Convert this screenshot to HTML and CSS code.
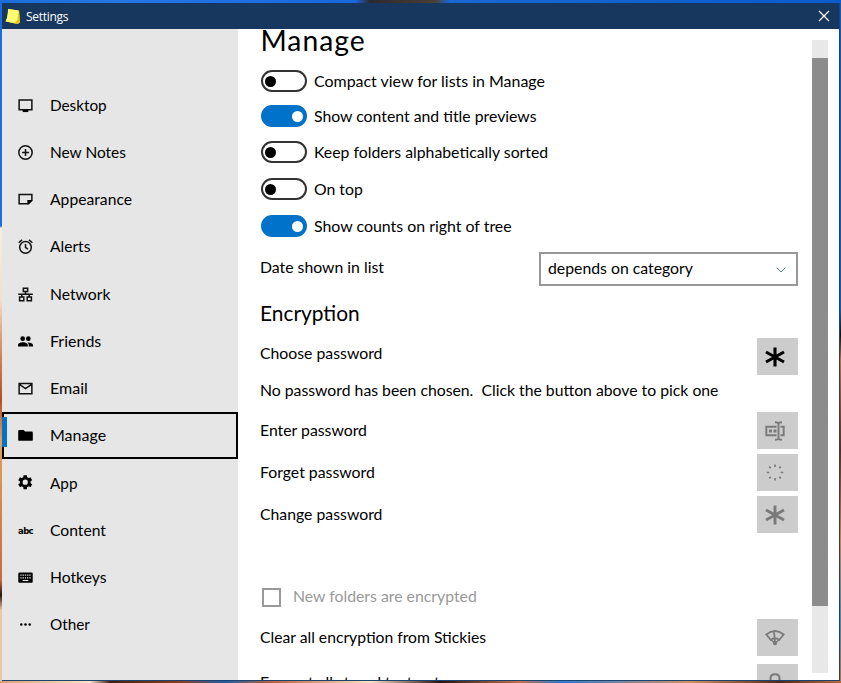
FILE: index.html
```
<!DOCTYPE html>
<html lang="en">
<head>
<meta charset="utf-8">
<title>Settings</title>
<link rel="stylesheet" href="styles.css">
</head>
<body>
<div class="window">
  <header class="titlebar">
    <svg class="logo" viewBox="0 0 16 17"><path d="M3 1L14 2.5 15 14.5 12.5 16 .6 13.5C2.4 10 3 6 3 1Z" fill="#f7ed36"/><path d="M3 1L13 2.4 12.6 12 9.5 15.2.6 13.3C2.4 10 3 6 3 1Z" fill="#fffb72"/><path d="M14 2.5L15 14.5 12.5 16 9.5 15.3 12.4 12Z" fill="#e2c41c"/></svg>
    <span>Settings</span>
    <svg class="close" viewBox="0 0 12 12"><path d="M1 1L11 11M11 1L1 11" stroke="#fff" stroke-width="1.3"/></svg>
  </header>
  <div class="body">
    <nav class="side">
      <a class="item"><svg viewBox="0 0 16 16"><path d="M1.2 2.2h13.6v10.300H1.200z" class="ln"/><path d="M5 12.500h6V15H5z"/></svg><span>Desktop</span></a>
      <a class="item"><svg viewBox="0 0 16 16"><circle cx="8" cy="8" r="7.100" class="ln"/><path d="M8 4.300v7.400M4.300 8h7.400" class="ln"/></svg><span class="notes">New Notes</span></a>
      <a class="item"><svg viewBox="0 0 16 16"><path d="M1.200 2.700h13.600v6.300l-3.500 3.500H1.200z" class="ln"/><path d="M10 13.200V8.500h5.500z"/></svg><span class="wide">Appearance</span></a>
      <a class="item"><svg viewBox="0 0 16 16"><circle cx="8" cy="8.900" r="6.200" class="ln"/><path d="M8 5.200v3.800l2.500 1.800M.7 4L4.300 1M15.300 4L11.700 1" class="ln"/></svg><span class="alerts">Alerts</span></a>
      <a class="item"><svg class="low" viewBox="0 0 16 16"><path d="M5.700 1.200h4.600v3.600H5.700zM1.700 10.700h4.500v4H1.700zM9.800 10.700h4.500v4H9.800zM8 5v2.700M.2 7.700h15.600M4 8v2.500M12 8v2.500" class="ln"/></svg><span class="wide">Network</span></a>
      <a class="item"><svg class="low" viewBox="0 0 16 16"><circle cx="5" cy="5" r="2.500"/><circle cx="11" cy="5" r="2.500"/><path d="M0 13.300v-1.600C0 9.500 3.300 8.700 5.200 8.700s5.200.8 5.200 3v1.600zM11.400 13.300v-1.600c0-1.200-.6-2-1.400-2.600 2-.4 6 .5 6 2.600v1.600z"/></svg><span class="friends">Friends</span></a>
      <a class="item"><svg viewBox="0 0 16 16"><path d="M1.200 2.700h13.600v10.800H1.200zM1.500 3.500L8 8.200l6.500-4.700" class="ln"/></svg><span class="friends">Email</span></a>
      <a class="item current"><svg viewBox="0 0 16 16"><path d="M.2 3.500q0-1.300 1.300-1.300H6l1.600 1.600h6.900q1.300 0 1.300 1.300v7.300q0 1.300-1.300 1.300h-13Q.2 13.700.2 12.400z"/></svg><span class="friends">Manage</span></a>
      <a class="item"><svg viewBox="0 0 16 16"><circle cx="7.700" cy="7.700" r="4.300" fill="none" stroke="#000" stroke-width="3"/><path d="M7.700.2v3M7.700 12.200v3M1.200 3.950l2.600 1.500M11.600 9.950l2.600 1.500M1.200 11.450l2.600-1.500M11.600 5.450l2.600-1.500" stroke="#000" stroke-width="3.800"/></svg><span>App</span></a>
      <a class="item"><b class="abc">abc</b><span class="wide">Content</span></a>
      <a class="item"><svg class="low" viewBox="0 0 16 16"><rect x=".3" y="2.700" width="15.400" height="11" rx="1.200"/><path d="M2.500 5.500h11M2.500 8.300h11" stroke="#e6e6e6" stroke-width="1.300" stroke-dasharray="1.400 1"/><path d="M5 11.200h6" stroke="#e6e6e6" stroke-width="1.200"/></svg><span class="wide">Hotkeys</span></a>
      <a class="item"><svg viewBox="0 0 16 16"><circle cx="3.500" cy="8" r="1.350"/><circle cx="8" cy="8" r="1.350"/><circle cx="12.500" cy="8" r="1.350"/></svg><span>Other</span></a>
    </nav>
    <main class="pane">
      <h1>Manage</h1>
      <div class="row"><i class="toggle"></i><span class="compact">Compact view for lists in Manage</span></div>
      <div class="row r2"><i class="toggle on"></i><span>Show content and title previews</span></div>
      <div class="row r3"><i class="toggle"></i><span>Keep folders alphabetically sorted</span></div>
      <div class="row r4"><i class="toggle"></i><span>On top</span></div>
      <div class="row r4"><i class="toggle on"></i><span class="counts">Show counts on right of tree</span></div>
      <div class="row date"><span>Date shown in list</span>
        <div class="select"><span>depends on category</span><svg viewBox="0 0 10 6"><path d="M.7.7L5 5 9.300.7" fill="none" stroke="#4a7f9f"/></svg></div></div>
      <h2>Encryption</h2>
      <div class="row act choose"><span>Choose password</span><button><svg viewBox="0 0 20 20"><path d="M10 .5v19M1 5l18 10M1 15L19 5" stroke="#000" stroke-width="3.100"/></svg></button></div>
      <div class="row note"><span>No password has been chosen.&nbsp; Click the button above to pick one</span></div>
      <div class="row act"><span>Enter password</span><button><svg viewBox="0 0 20 20"><g fill="none" stroke="#7a7a7a" stroke-width="1.900"><path d="M11.500 5.800H1.300v8.400h10.200M15.500 5.800h3.200v8.400h-3.200M13.500 2v16M10 1.200q3.500 0 3.500 1.500 0-1.500 3.500-1.500M10 18.800q3.500 0 3.500-1.500 0 1.500 3.500 1.500"/></g><path d="M4 8.500h3v3H4zM8.500 8.500h3v3h-3z" fill="#7a7a7a"/></svg></button></div>
      <div class="row act"><span>Forget password</span><button><svg viewBox="0 0 20 20"><path d="M10 1.500v2.500M10 15v2.500M1.800 9.500h2.500M15.700 9.500h2.500M4.200 3.700l1.500 1.500M14.300 13.800l1.500 1.500M4.200 15.300l1.500-1.500M14.300 5.200l1.500-1.500" stroke="#7a7a7a" stroke-width="1.700"/></svg></button></div>
      <div class="row act"><span>Change password</span><button><svg viewBox="0 0 20 20"><path d="M10 .5v19M1 5l18 10M1 15L19 5" stroke="#7a7a7a" stroke-width="2.900"/></svg></button></div>
      <div class="row check"><i class="box"></i><span>New folders are encrypted</span></div>
      <div class="row act clear"><span>Clear all encryption from Stickies</span><button><svg viewBox="0 0 20 20"><g fill="none" stroke="#7a7a7a" stroke-width="1.800"><path d="M1.300 6.500Q10-.5 18.700 6.500L14.300 11.800Q10 8.700 5.700 11.800zM9 3.500L10 15"/><path d="M5.700 11.500L10 15.300 14.300 11.500" stroke-width="1.300"/></g><circle cx="10" cy="15.300" r="2" fill="#7a7a7a"/></svg></button></div>
      <div class="row act last"><span>Encrypt all stored text notes</span><button><svg viewBox="0 0 20 20"><path d="M5.500 9V5.500q0-4.200 4.500-4.200t4.500 4.200V9" fill="none" stroke="#7a7a7a" stroke-width="2.100"/><path d="M3 8.200h14V19H3z" fill="#7a7a7a"/></svg></button></div>
    </main>
    <div class="track"><div class="thumb"></div></div>
  </div>
</div>
</body>
</html>
```
FILE: styles.css
```
* { box-sizing: border-box; }
html, body { height: 683px; overflow: hidden; }
body {
  margin: 0;
  padding: 3px 1px 2px 2px;
  font: 15.800px/20px Lato, "Liberation Sans", sans-serif;
  color: #000;
  background:
    linear-gradient(90deg, #1b6ddb, #2577e6 120px, #1868de 355px, #2c2930 370px, #4a4030 435px, #1867d5 450px, #0a5bcc) top / 100% 3px no-repeat,
    linear-gradient(90deg, #d9a071, #f8e4c8 90px, #432111 110px, #8b3c1b 180px, #1c5da4 225px, #b75f3b 270px, #fae3c5 370px, #2a1410 440px, #c3714c 520px, #2b7bd2 560px, #d19061 690px, #542817 780px, #b56a40) bottom / 100% 2px no-repeat,
    linear-gradient(#1b6ddb 226px, #f5ede4 228px, #f3dfcc 300px, #d79a70 340px, #b64f24 400px, #e0a060 440px, #c56c3e 580px, #2c1510 595px, #e8c8a2 610px) left / 2px 100% no-repeat,
    linear-gradient(#075bcf 310px, #101014 335px, #c6683a 360px, #6c2515 450px, #d77c43 540px, #4787bb 620px, #bd6d43) right / 2px 100% no-repeat;
}
.window { height: 678px; border: solid #1d4470; border-width: 0 1px 1px 0; overflow: hidden; background: #fff; }
.titlebar { height: 26px; background: #17375e; color: #fff; display: flex; align-items: center; padding: 0 9px 0 3px; font: 12px "Open Sans", sans-serif; }
.titlebar span { margin: 0 0 0 5px; letter-spacing: -.300px; }
.logo { width: 16px; height: 17px; }
.close { width: 12px; height: 12px; margin-left: auto; }
.body { display: flex; height: 651px; }
.side { width: 236px; flex: none; background: #e6e6e6; padding-top: 52.450px; }
.item { height: 47.200px; display: flex; align-items: center; gap: 17px; padding-left: 16px; font-size: 15.300px; }
.item .notes { font-size: 15.450px; }
.item .wide { font-size: 15.700px; }
.item .friends { font-size: 16px; }
.item .alerts { font-size: 15.600px; margin-bottom: 1px; }
.item svg { width: 15px; height: 15px; }
.item .low { margin-top: 1px; }
.item .ln { fill: none; stroke: #111; stroke-width: 1.600; }
.abc { width: 15px; margin-top: 3px; font: bold 8.500px/15px "DejaVu Sans", sans-serif; letter-spacing: -.600px; }
.current { position: relative; box-shadow: inset 0 0 0 2px #000; }
.current::before { content: ""; position: absolute; left: 0; top: 5px; width: 5px; height: 30px; background: #0072c9; }
.pane { width: 538px; margin-left: 22px; flex: none; overflow: hidden; white-space: nowrap; }
h1 { margin: 0; height: 35px; font: 28.300px/23px Lato, sans-serif; letter-spacing: 1px; padding-left: .500px; }
h2 { margin: 11px 0 7px; height: 34px; font: 20.900px/31px Lato, sans-serif; }
.row { height: 34px; display: flex; align-items: center; }
.compact { font-size: 15.950px; }
.counts { font-size: 15.900px; }
.r2 { margin-top: 1px; }
.r3 { margin-top: 2px; }
.r4 { margin-top: 3px; }
.toggle { width: 46px; height: 22px; border: 2px solid #333; border-radius: 11px; margin: 0 7.500px 0 .500px; display: flex; align-items: center; padding: 0 2px; }
.toggle::after { content: ""; width: 11px; height: 11px; border-radius: 50%; background: #000; }
.toggle.on { background: #0072c9; border-color: #0072c9; justify-content: flex-end; }
.toggle.on::after { background: #fff; }
.date { margin-top: 9px; justify-content: space-between; }
.date > span { margin-bottom: 4px; }
.select { width: 259px; height: 34px; border: 2px solid #999; display: flex; align-items: center; justify-content: space-between; padding: 0 10px 0 7px; }
.select span { margin-bottom: 2px; }
.select svg { width: 10px; height: 6px; margin-top: 2px; }
.act { height: 37px; margin-top: 5px; justify-content: space-between; }
.act span, .note span, .check span { margin-bottom: 2px; }
.act button { width: 41px; height: 37px; padding: 0 4px 0 0; border: 0; background: #ccc; display: flex; align-items: center; justify-content: center; }
.act svg { width: 20px; height: 20px; margin: 0 .500px 0 0; }
.choose { margin-top: 0; }
.choose span { margin-bottom: 8px; }
.note { height: 32px; }
.note span { font-size: 15.780px; }
.clear span { font-size: 15.700px; }
.check { margin-top: 47px; color: #999; }
.box { width: 19px; height: 19px; border: 2px solid #999; margin: 0 12px 0 2px; }
.last { margin-top: 8px; }
.track { width: 16px; height: 633px; margin: 11px 0 0 14px; padding-top: 18px; background: #e8e8e8; }
.thumb { height: 548px; background: #8c8c8c; }
```
